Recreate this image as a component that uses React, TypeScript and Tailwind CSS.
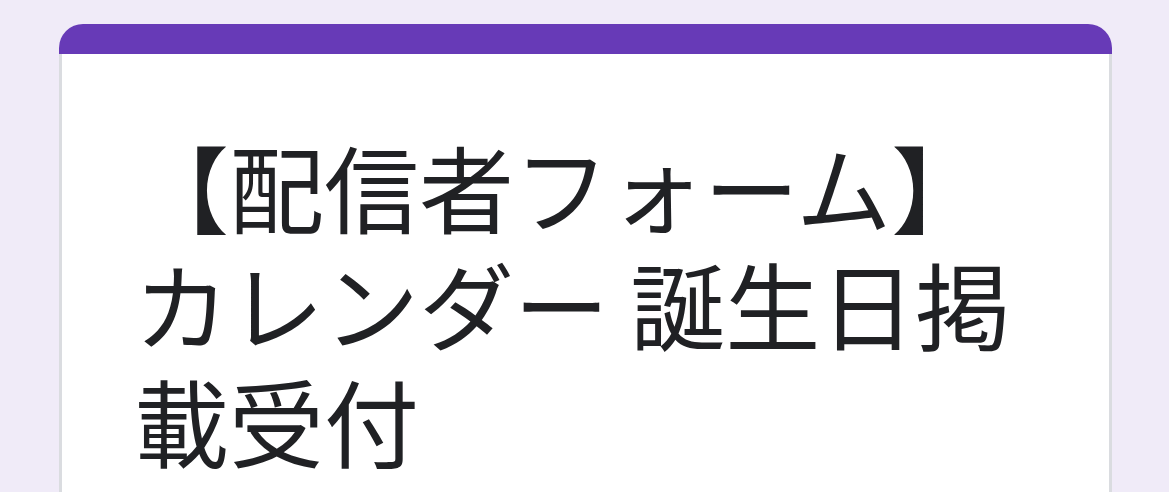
export default function App() {
  return (
    <div className="min-h-screen w-full bg-[#f0ebf8] pt-[24px] pl-[59px] pr-[57px]">
      <div className="overflow-hidden rounded-t-[24px] bg-white">
        {/* Top accent bar */}
        <div className="h-[30px] bg-[#673ab7]" />

        {/* Title */}
        <div className="h-[460px] border-x-[3px] border-[#dadce0] pl-[72px] pr-[40px] pt-[73px]">
          <h1
            className="text-[95px] leading-[117px] font-normal text-[#202124]"
            style={{ fontFamily: '"Noto Sans CJK JP", "Noto Sans", sans-serif' }}
          >
            【配信者フォーム】カレンダー 誕生日掲載受付
          </h1>
        </div>
      </div>
    </div>
  );
}
